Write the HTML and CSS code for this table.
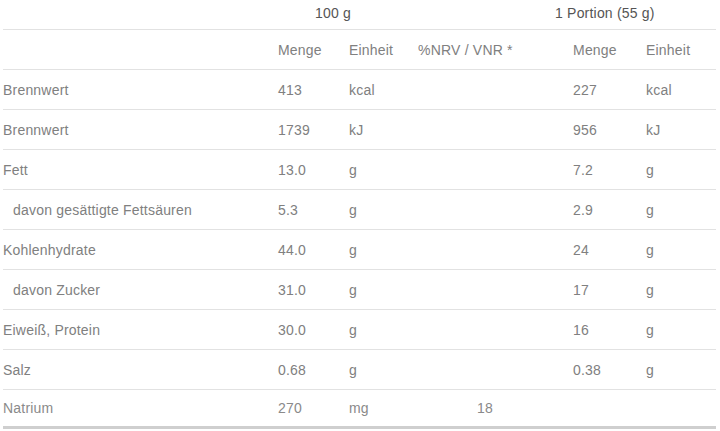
FILE: index.html
```html
<!DOCTYPE html>
<html lang="de">
<head>
<meta charset="utf-8">
<title>Nährwerte</title>
<link rel="stylesheet" href="styles.css">
</head>
<body>
<div class="wrap">
<table class="nt">
  <colgroup>
    <col class="c1"><col class="c2"><col class="c3"><col class="c4"><col class="c5"><col class="c6">
  </colgroup>
  <thead>
    <tr class="top">
      <th></th>
      <th colspan="2" class="g100">100 g</th>
      <th colspan="3" class="portion">1 Portion (55 g)</th>
    </tr>
    <tr class="sub">
      <th></th>
      <th>Menge</th>
      <th>Einheit</th>
      <th>%NRV / VNR *</th>
      <th>Menge</th>
      <th>Einheit</th>
    </tr>
  </thead>
  <tbody>
    <tr><td>Brennwert</td><td>413</td><td>kcal</td><td></td><td>227</td><td>kcal</td></tr>
    <tr><td>Brennwert</td><td>1739</td><td>kJ</td><td></td><td>956</td><td>kJ</td></tr>
    <tr><td>Fett</td><td>13.0</td><td>g</td><td></td><td>7.2</td><td>g</td></tr>
    <tr><td class="ind">davon gesättigte Fettsäuren</td><td>5.3</td><td>g</td><td></td><td>2.9</td><td>g</td></tr>
    <tr><td>Kohlenhydrate</td><td>44.0</td><td>g</td><td></td><td>24</td><td>g</td></tr>
    <tr><td class="ind">davon Zucker</td><td>31.0</td><td>g</td><td></td><td>17</td><td>g</td></tr>
    <tr><td>Eiweiß, Protein</td><td>30.0</td><td>g</td><td></td><td>16</td><td>g</td></tr>
    <tr><td>Salz</td><td>0.68</td><td>g</td><td></td><td>0.38</td><td>g</td></tr>
    <tr class="last"><td>Natrium</td><td>270</td><td>mg</td><td class="nrv">18</td><td></td><td></td></tr>
  </tbody>
</table>
</div>
</body>
</html>
```
FILE: styles.css
```css
html, body {
  margin: 0;
  padding: 0;
  background: #ffffff;
}
.wrap {
  padding: 0 4px 0 3px;
}
.nt {
  width: 713px;
  border-collapse: collapse;
  table-layout: fixed;
  font-family: "Liberation Sans", Arial, sans-serif;
  font-size: 14px;
  letter-spacing: 0.2px;
  color: #808080;
}
.c1 { width: 275px; }
.c2 { width: 71px; }
.c3 { width: 69px; }
.c4 { width: 155px; }
.c5 { width: 73px; }
.c6 { width: 70px; }
.nt th, .nt td {
  padding: 0;
  text-align: left;
  font-weight: normal;
  white-space: nowrap;
  border-bottom: 1px solid #e2e2e2;
  height: 39px;
  vertical-align: middle;
}
.nt tr.top th {
  height: 25px;
  padding-bottom: 4px;
  color: #555555;
}
.nt th.g100 { padding-left: 37px; }
.nt th.portion { padding-left: 137px; }
.nt td.ind { padding-left: 10px; }
.nt td.nrv { padding-left: 59px; }
.nt tr.last td {
  height: 36px;
  border-bottom: 3px solid #cfcfcf;
  color: #8a8a8a;
}
```
